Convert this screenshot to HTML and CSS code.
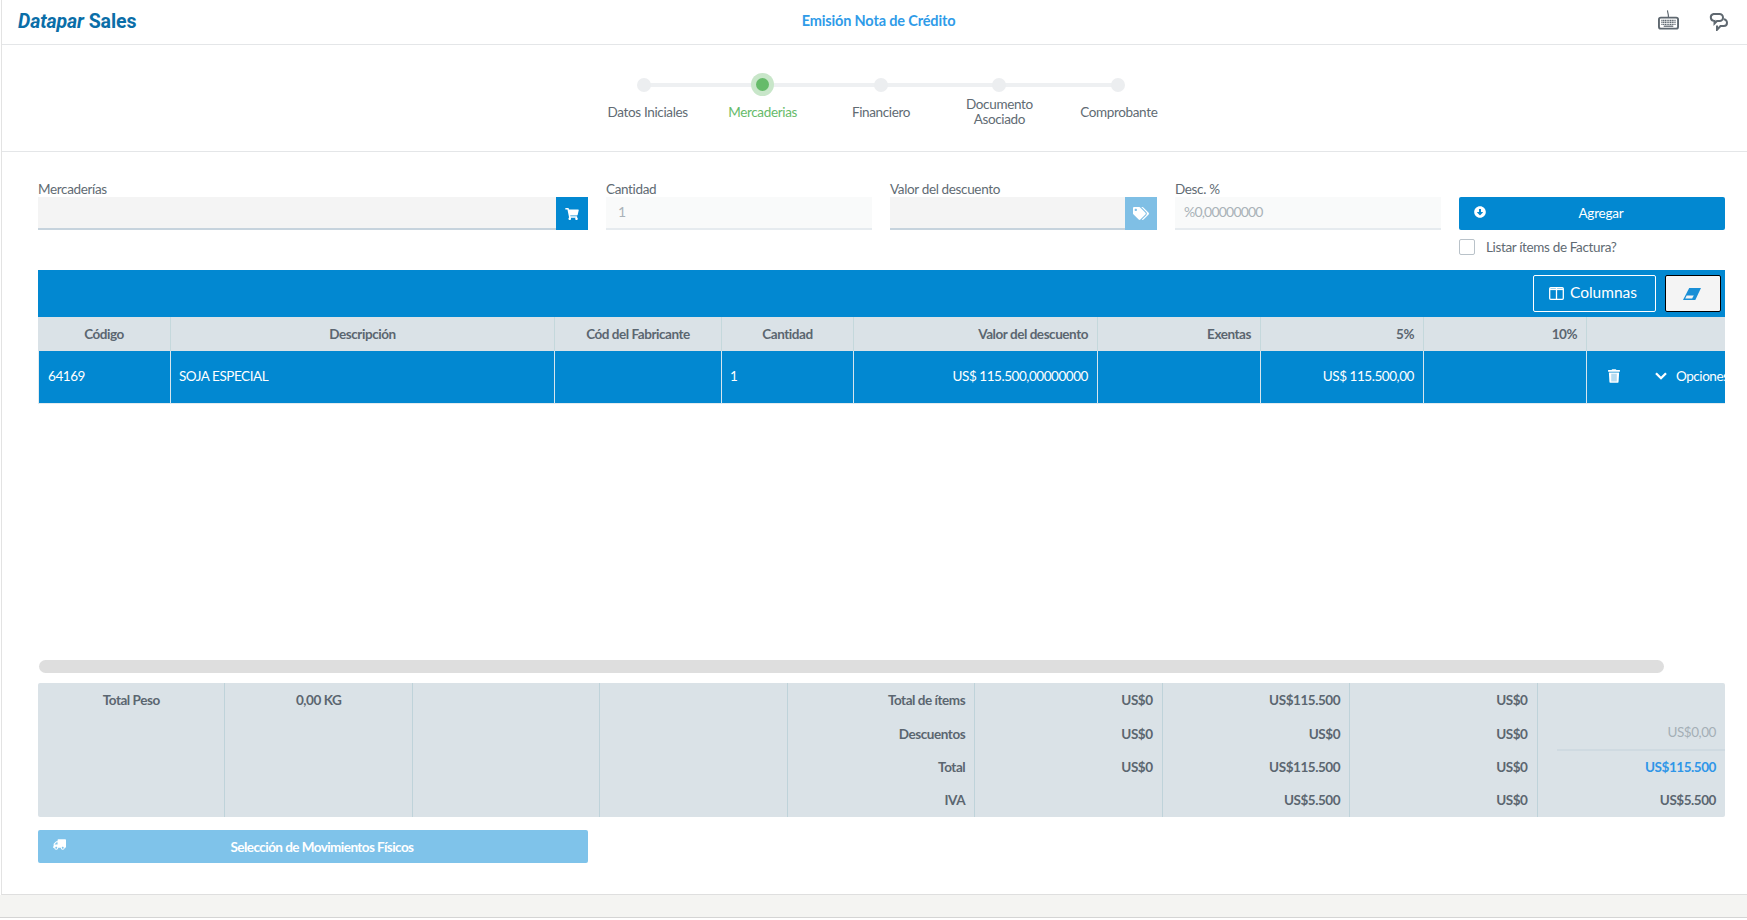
FILE: index.html
```html
<!DOCTYPE html>
<html lang="es">
<head>
<meta charset="utf-8">
<title>Emisión Nota de Crédito</title>
<link rel="stylesheet" href="styles.css">
</head>
<body>
<div class="page">
  <main class="card">
    <header class="topbar">
      <div class="logo"><em>Datapar</em> <span>Sales</span></div>
      <h1 class="title">Emisión Nota de Crédito</h1>
      <div class="top-icons">
        <svg class="ico-kb" viewBox="0 0 22 20" fill="none" stroke="#5f6870"><path d="M10 0c-.3 2 1.200 3 .9 7" stroke-width="1.200"/><rect x="1" y="7.500" width="20" height="11.500" rx="2" stroke-width="2"/><path d="M3.500 10.500h15M3.500 12.500h15M3.500 14.500h15" stroke-width="1.400" stroke-dasharray="1.300 .5"/><path d="M6 16.500h10" stroke-width="1.300"/></svg>
        <svg class="ico-chat" viewBox="0 0 19 18" fill="none" stroke="#5f6870" stroke-width="2"><path d="M4.500 1h6a3.500 3.500 0 0 1 0 7H8L5.500 10.500V7.900A3.500 3.500 0 0 1 4.500 1z"/><path d="M14.500 6.300a3.400 3.400 0 0 1 3.500 3.400c0 2-1.500 3.300-3.300 3.300H11.500L8 16.800V12.500"/></svg>
      </div>
    </header>

    <nav class="stepper">
      <div class="step first"><i class="dot"></i><span class="step-label">Datos Iniciales</span></div>
      <div class="step active"><i class="dot"></i><span class="step-label">Mercaderias</span></div>
      <div class="step"><i class="dot"></i><span class="step-label">Financiero</span></div>
      <div class="step"><i class="dot"></i><span class="step-label">Documento<br>Asociado</span></div>
      <div class="step last"><i class="dot"></i><span class="step-label">Comprobante</span></div>
    </nav>

    <section class="content">
      <form class="form-row">
        <div class="field">
          <label class="field-label">Mercaderías</label>
          <div class="input-group">
            <div class="input"></div>
            <button type="button" class="addon"><svg class="ico-cart" viewBox="0 0 576 512"><path fill="#fff" d="M528.12 301.319l47.273-208C578.806 78.301 567.391 64 551.99 64H159.208l-9.166-44.81C147.758 8.021 137.93 0 126.529 0H24C10.745 0 0 10.745 0 24v16c0 13.255 10.745 24 24 24h69.883l70.248 343.435C147.325 417.1 136 435.222 136 456c0 30.928 25.072 56 56 56s56-25.072 56-56c0-15.674-6.447-29.835-16.824-40h209.647C430.447 426.165 424 440.326 424 456c0 30.928 25.072 56 56 56s56-25.072 56-56c0-22.172-12.888-41.332-31.579-50.405l5.517-24.276c3.413-15.018-8.002-29.319-23.403-29.319H218.117l-6.545-32h293.145c11.206 0 20.92-7.754 23.403-18.681z"/></svg></button>
          </div>
        </div>
        <div class="field">
          <label class="field-label">Cantidad</label>
          <div class="input disabled">1</div>
        </div>
        <div class="field">
          <label class="field-label">Valor del descuento</label>
          <div class="input-group">
            <div class="input"></div>
            <button type="button" class="addon soft"><svg class="ico-tags" viewBox="0 0 640 512"><path fill="#fff" d="M497.941 225.941L286.059 14.059A48 48 0 0 0 252.118 0H48C21.49 0 0 21.49 0 48v204.118a48 48 0 0 0 14.059 33.941l211.882 211.882c18.744 18.745 49.136 18.746 67.882 0l204.118-204.118c18.745-18.745 18.745-49.137 0-67.882zM112 160c-26.51 0-48-21.49-48-48s21.49-48 48-48 48 21.49 48 48-21.49 48-48 48zm513.941 133.823L421.823 497.941c-18.745 18.745-49.137 18.745-67.882 0l-.36-.36L527.64 323.522c16.999-16.999 26.36-39.6 26.36-63.64s-9.362-46.641-26.36-63.64L331.397 0h48.721a48 48 0 0 1 33.941 14.059l211.882 211.882c18.745 18.745 18.745 49.137 0 67.882z"/></svg></button>
          </div>
        </div>
        <div class="field">
          <label class="field-label">Desc. %</label>
          <div class="input disabled pct">%0,00000000</div>
        </div>
        <div class="field action">
          <button type="button" class="btn-primary"><svg class="ico-add" viewBox="0 0 512 512"><path fill="#fff" d="M504 256c0 137-111 248-248 248S8 393 8 256 119 8 256 8s248 111 248 248zM212 140v116h-70.9c-10.7 0-16.1 13-8.5 20.5l114.9 114.3c4.7 4.7 12.2 4.7 16.9 0l114.9-114.3c7.6-7.6 2.2-20.5-8.5-20.5H300V140c0-6.6-5.4-12-12-12h-64c-6.6 0-12 5.400-12 12z"/></svg><span>Agregar</span></button>
          <div class="check-row"><i class="checkbox"></i><span>Listar ítems de Factura?</span></div>
        </div>
      </form>

      <div class="grid-wrap">
        <div class="toolbar">
          <button type="button" class="btn-outline"><svg class="ico-cols" viewBox="0 0 15 13" fill="none" stroke="#fff" stroke-width="1.300"><rect x=".7" y=".7" width="13.600" height="11.600" rx="1"/><path d="M.7 2.300h13.600" stroke-width="1.600"/><path d="M7.500 1v11"/></svg>Columnas</button>
          <button type="button" class="btn-eraser"><svg class="ico-eraser" viewBox="0 0 18 12"><path fill="#1a8fd6" d="M6.200 0H18l-5.700 12H0z"/><path fill="#f4f4f4" d="M3.700 7.400h7.100l-1.700 3.200H2.200z"/></svg></button>
        </div>
        <table class="grid">
          <colgroup>
            <col class="c-code"><col class="c-desc"><col class="c-fab"><col class="c-qty"><col class="c-disc"><col class="c-tax"><col class="c-tax"><col class="c-tax2"><col class="c-act">
          </colgroup>
          <thead>
            <tr>
              <th>Código</th><th>Descripción</th><th>Cód del Fabricante</th><th>Cantidad</th>
              <th class="num">Valor del descuento</th><th class="num">Exentas</th><th class="num">5%</th><th class="num">10%</th><th></th>
            </tr>
          </thead>
          <tbody>
            <tr>
              <td>64169</td><td>SOJA ESPECIAL</td><td></td><td>1</td>
              <td class="num">US$ 115.500,00000000</td><td></td><td class="num">US$ 115.500,00</td><td></td>
              <td class="actions"><div class="actions-in">
                <svg class="ico-trash" viewBox="0 0 448 512"><path fill="#fff" d="M432 32H312l-9.400-18.700A24 24 0 0 0 281.100 0H166.800a23.720 23.720 0 0 0-21.400 13.300L136 32H16A16 16 0 0 0 0 48v32a16 16 0 0 0 16 16h416a16 16 0 0 0 16-16V48a16 16 0 0 0-16-16zM53.200 467a48 48 0 0 0 47.900 45h245.800a48 48 0 0 0 47.900-45L416 128H32z"/><path fill="#b8dcf0" d="M120 170h208v290H120z"/></svg>
                <svg class="ico-chev" viewBox="0 0 12 8" fill="none" stroke="#fff" stroke-width="2.300"><path d="M1 1.200l5 5 5-5"/></svg>
                <span>Opciones</span>
              </div></td>
            </tr>
          </tbody>
        </table>
      </div>

      <div class="scrollbar"><div class="thumb"></div></div>

      <table class="totals">
        <tbody>
          <tr><td class="center">Total Peso</td><td class="center">0,00 KG</td><td></td><td></td><td>Total de ítems</td><td>US$0</td><td>US$115.500</td><td>US$0</td><td></td></tr>
          <tr><td></td><td></td><td></td><td></td><td>Descuentos</td><td>US$0</td><td>US$0</td><td>US$0</td><td class="t-input"><div>US$0,00</div></td></tr>
          <tr class="t-row3"><td></td><td></td><td></td><td></td><td>Total</td><td>US$0</td><td>US$115.500</td><td>US$0</td><td class="t-blue">US$115.500</td></tr>
          <tr><td></td><td></td><td></td><td></td><td>IVA</td><td></td><td>US$5.500</td><td>US$0</td><td>US$5.500</td></tr>
        </tbody>
      </table>

      <button type="button" class="btn-moves"><svg class="ico-truck" viewBox="0 0 640 512"><path fill="#fff" d="M624 352h-16V243.900c0-12.700-5.100-24.900-14.100-33.900L494 110.100c-9-9-21.200-14.100-33.900-14.100H416V48c0-26.500-21.500-48-48-48H48C21.500 0 0 21.500 0 48v320c0 26.500 21.500 48 48 48h16c0 53 43 96 96 96s96-43 96-96h128c0 53 43 96 96 96s96-43 96-96h48c8.800 0 16-7.200 16-16v-32c0-8.800-7.200-16-16-16zM160 464c-26.500 0-48-21.500-48-48s21.500-48 48-48 48 21.500 48 48-21.500 48-48 48zm320 0c-26.500 0-48-21.500-48-48s21.500-48 48-48 48 21.500 48 48-21.500 48-48 48zm80-208H416V144h44.100l99.900 99.900V256z"/></svg><span>Selección de Movimientos Físicos</span></button>
    </section>
  </main>
  <div class="strip"></div>
</div>
</body>
</html>
```
FILE: styles.css
```css
* { box-sizing: border-box; }
html, body { margin: 0; padding: 0; }
body { font-family: Lato, "Liberation Sans", sans-serif; font-size: 14px; color: #5f6a72; background: #fff; overflow: hidden; }
button { font-family: inherit; border: 0; padding: 0; cursor: pointer; }

.page { height: 920px; display: flex; flex-direction: column; }
.card { height: 895px; margin-left: 1px; background: #fff; border-left: 1px solid #e3e3e3; border-bottom: 1px solid #dfdfdf; }
.strip { height: 23px; background: #f4f4f2; border-bottom: 1px solid #d4d4d4; }

.topbar { height: 45px; border-bottom: 1px solid #e4e6e8; display: grid; grid-template-columns: 1fr auto 1fr; align-items: center; padding: 0 19px 0 16px; }
.logo { font-family: Roboto, sans-serif; font-size: 19.500px; font-weight: 700; color: #0a6ea8; letter-spacing: -.1px; margin-bottom: 2px; }
.logo em { font-style: italic; }
.title { margin: 0 0 3px; padding-left: 11px; font-size: 14.500px; font-weight: 700; color: #2f9be8; letter-spacing: -.15px; }
.top-icons { display: flex; justify-content: flex-end; align-items: flex-start; gap: 30px; margin-bottom: 3px; }
.ico-kb { width: 21px; height: 20px; }
.ico-chat { width: 19px; height: 18px; margin-top: 3px; }

.stepper { height: 107px; border-bottom: 1px solid #e4e6e8; display: flex; justify-content: center; padding: 31px 0 0 13px; }
.step { position: relative; width: 118.400px; display: flex; flex-direction: column; align-items: center; }
.step::before { content: ""; position: absolute; top: 7px; left: 50%; width: 118.400px; height: 4px; background: #eef0f2; }
.step.last::before { display: none; }
.dot { position: relative; width: 14px; height: 14px; margin-top: 2px; border-radius: 50%; background: #eceef0; }
.step.active .dot { background: #66bb6a; box-shadow: 0 0 0 5px #c8e6c9; width: 13px; height: 13px; }
.step-label { height: 38px; margin-top: 1px; display: flex; align-items: center; text-align: center; line-height: 15px; font-size: 13.500px; color: #616b73; white-space: nowrap; letter-spacing: -.35px; }
.step.active .step-label { color: #66bb6a; margin-top: 2px; }
.step.first .step-label { margin-left: 7px; }
.step.last .step-label { margin-left: 2px; }

.content { padding: 29px 0 0 36px; }
.form-row { display: grid; grid-template-columns: 550px 266px 267px 266px 266px; column-gap: 18px; height: 89px; }
.field-label { display: block; height: 16px; line-height: 16px; font-size: 13.500px; color: #616b73; letter-spacing: -.35px; }
.input { flex: 1; height: 33px; background: #f4f4f4; border-bottom: 2px solid #c6d3dd; padding-left: 12px; line-height: 29px; font-size: 14px; }
.input.disabled { background: #f9fafa; border-bottom-color: #e6ebef; color: #a9b2b8; }
.input.pct { padding-left: 9px; letter-spacing: -.8px; }
.input-group { display: flex; align-items: flex-start; }
.addon { width: 32px; height: 33px; background: #0288d1; display: flex; align-items: center; justify-content: center; }
.addon.soft { background: #7fbfe5; }
.ico-cart { width: 14px; height: 12px; }
.ico-tags { width: 16px; height: 13px; }
.action { padding-top: 16px; }
.btn-primary { width: 100%; height: 33px; background: #0288d1; color: #fff; font-size: 13.500px; border-radius: 2px; display: flex; align-items: center; padding: 0 9px 2px 15px; letter-spacing: -.2px; }
.btn-primary span { flex: 1; text-align: center; }
.ico-add { width: 12px; height: 12px; margin-top: -1px; }
.check-row { display: flex; align-items: center; margin-top: 9px; font-size: 13.500px; color: #616b73; letter-spacing: -.35px; }
.checkbox { width: 16px; height: 16px; border: 1px solid #b9c2c9; border-radius: 2px; margin-right: 11px; background: #fff; }

.grid-wrap { width: 1687px; height: 390px; }
.toolbar { height: 47px; background: #0288d1; display: flex; justify-content: flex-end; align-items: center; padding-right: 4px; gap: 9px; }
.btn-outline { width: 123px; height: 37px; background: transparent; border: 1px solid #fff; border-radius: 2px; color: #fff; font-size: 15.500px; display: flex; align-items: center; justify-content: center; gap: 6px; padding: 0 3px 3px 0; }
.ico-cols { width: 15px; height: 13px; margin-top: 2px; }
.btn-eraser { width: 56px; height: 37px; background: #f4f4f4; border: 1px solid #000; border-radius: 2px; display: flex; align-items: center; justify-content: center; padding-right: 3px; }
.ico-eraser { width: 18px; height: 12px; }

.grid { table-layout: fixed; width: 1687px; border-collapse: separate; border-spacing: 0; }
.c-code { width: 133px; } .c-desc { width: 384px; } .c-fab { width: 167px; } .c-qty { width: 132px; }
.c-disc { width: 244px; } .c-tax { width: 163px; } .c-tax2 { width: 163px; } .c-act { width: 138px; }
.grid th { height: 34px; background: #dae2e7; color: #5b6670; font-size: 13.500px; font-weight: 700; letter-spacing: -.45px; text-align: center; padding: 0 9px; border-right: 1px solid #c4d8dc; white-space: nowrap; }
.grid th:last-child { border-right: 0; }
.grid td { height: 53px; background: #0288d1; color: #fff; font-size: 13.500px; letter-spacing: -.45px; padding: 0 9px 2px 8px; border-right: 1px solid #d6e6ee; border-bottom: 1px solid #e3ebef; white-space: nowrap; }
.grid td:last-child { border-right: 0; }
.grid td:first-child { border-left: 1px solid #e3ebef; padding-left: 9px; }
.grid .num { text-align: right; }
.grid .actions { padding: 0 0 2px; overflow: hidden; }
.actions-in { display: flex; align-items: center; padding-left: 21px; }
.ico-trash { width: 12px; height: 14px; flex: none; }
.ico-chev { width: 12px; height: 8px; margin-left: 35px; flex: none; }
.actions-in span { margin-left: 9px; flex: none; }

.scrollbar { width: 1625px; height: 13px; margin-left: 1px; }
.thumb { height: 13px; background: #dedede; border-radius: 7px; }

.totals { table-layout: fixed; width: 1687px; margin: 10px 0 0; border-collapse: separate; border-spacing: 0; background: #dae2e7; border-radius: 2px; }
.totals td { height: 33.500px; padding: 0 9px; text-align: right; font-size: 13.500px; font-weight: 700; letter-spacing: -.45px; color: #5b6670; border-right: 1px solid #bfd3da; white-space: nowrap; }
.totals .t-row3 td { height: 33px; }
.totals td:last-child { border-right: 0; }
.totals td.center { text-align: center; }
.totals td.t-input { padding: 0; font-weight: 400; color: #a4afb6; }
.t-input div { margin-left: 19px; height: 34px; line-height: 30px; padding-right: 9px; border-bottom: 2px solid #cfdae1; }
.totals td.t-blue { color: #2f96e8; }

.btn-moves { width: 550px; height: 33px; margin: 13px 0 0; background: #7fc3ea; color: #fff; font-size: 13.500px; font-weight: 700; border-radius: 2px; display: flex; align-items: center; padding: 0 10px 0 15px; letter-spacing: -.55px; }
.btn-moves span { flex: 1; text-align: center; }
.ico-truck { width: 13px; height: 11px; margin-top: -4px; transform: scaleX(-1); }
```
